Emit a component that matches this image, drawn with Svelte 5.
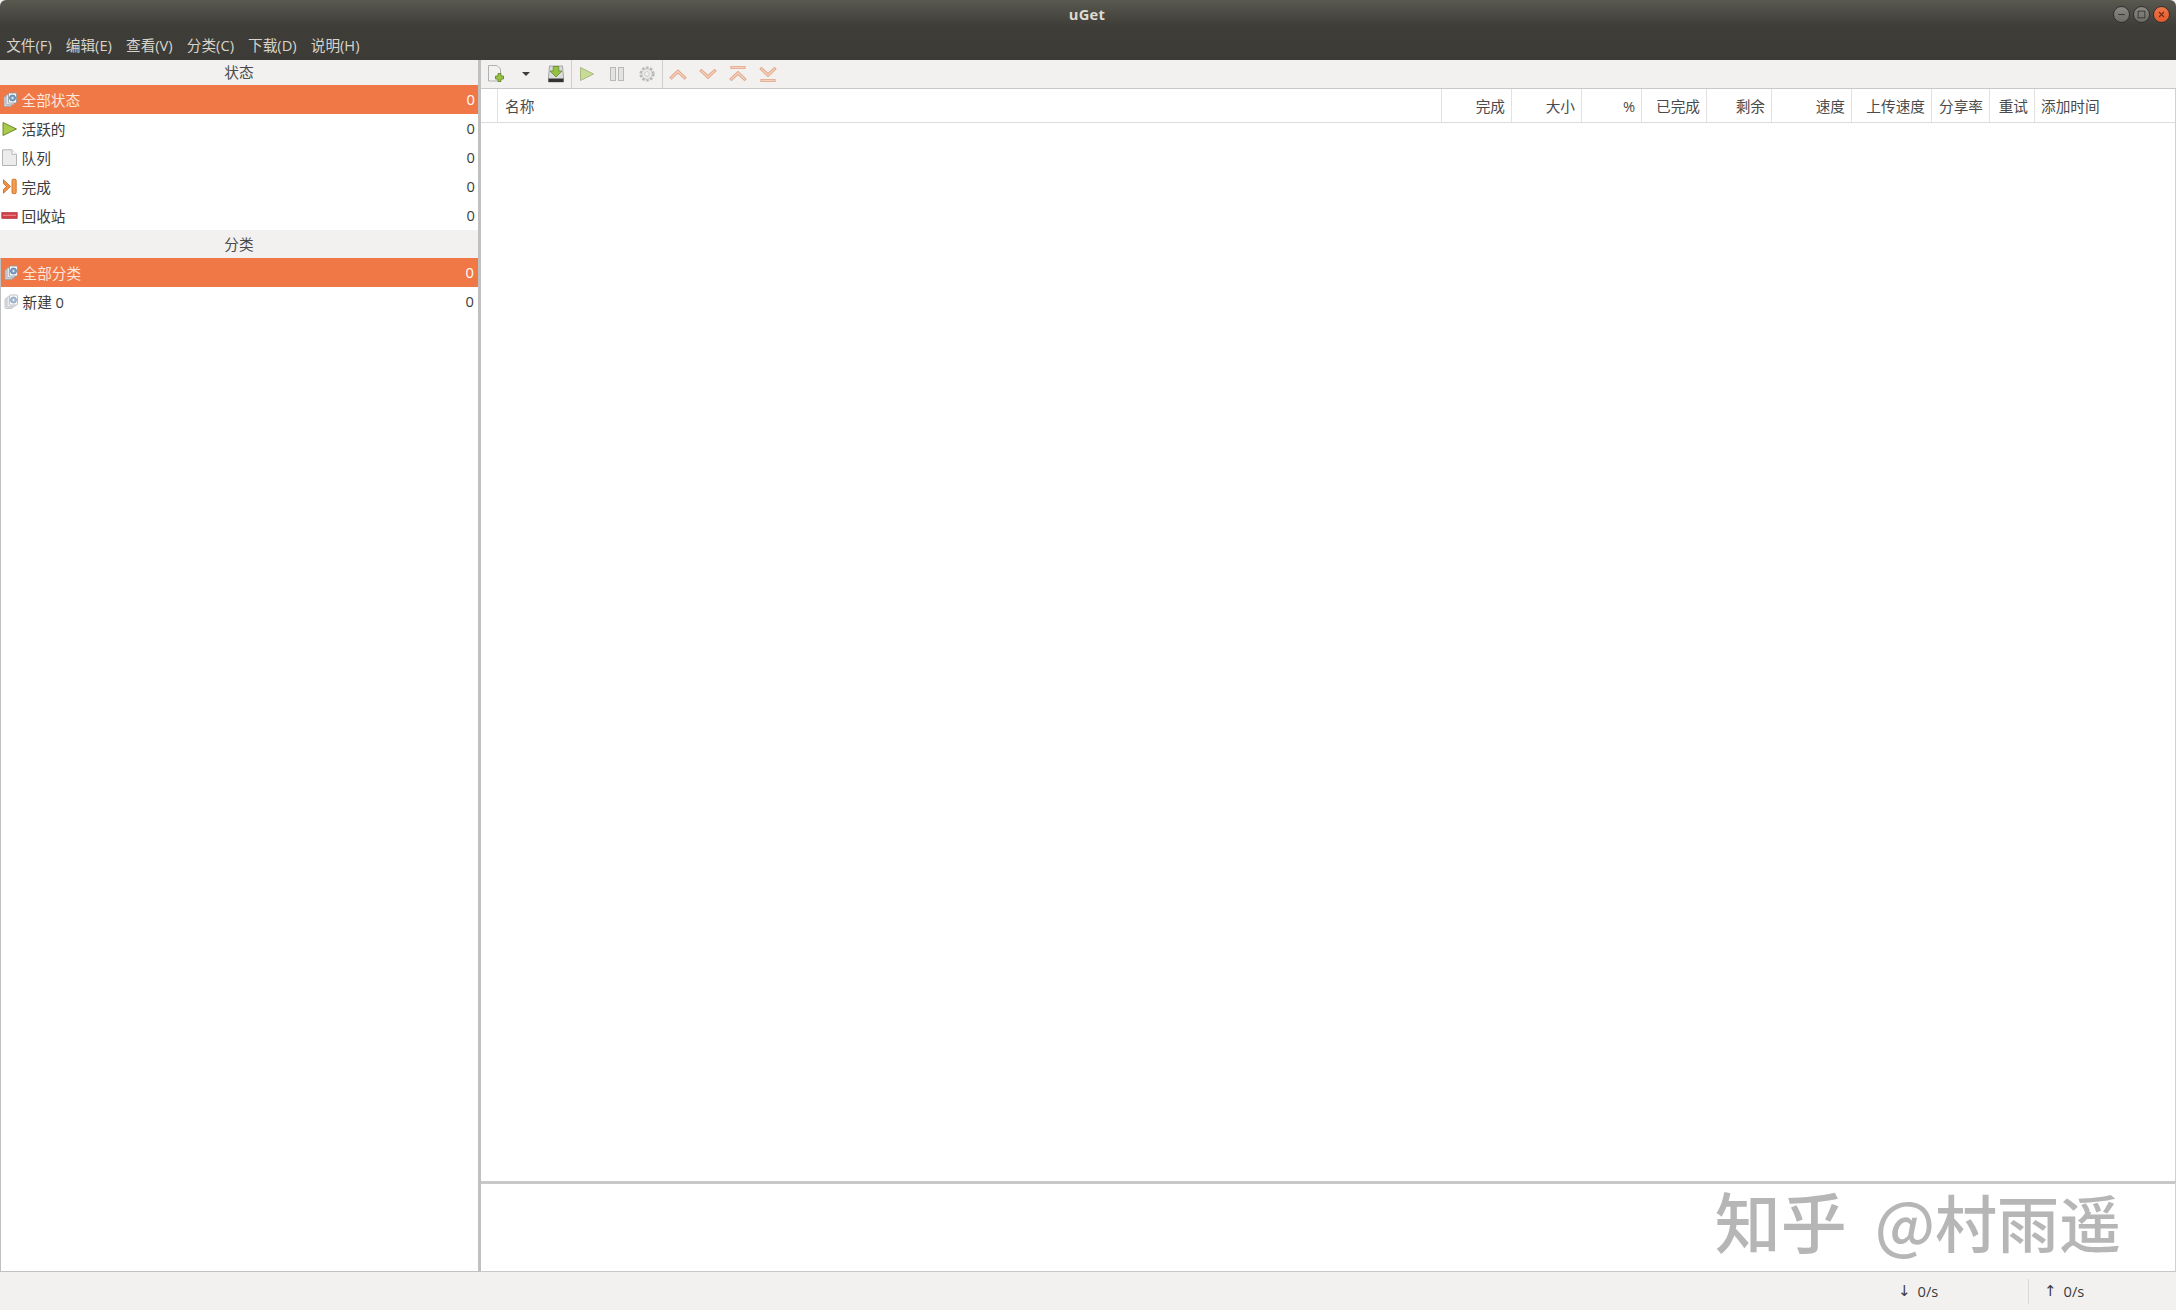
<script>
  const menus = ['文件(F)', '编辑(E)', '查看(V)', '分类(C)', '下载(D)', '说明(H)']

  const states = [
    { name: '全部状态', icon: 'stack', selected: true },
    { name: '活跃的', icon: 'play' },
    { name: '队列', icon: 'page' },
    { name: '完成', icon: 'done' },
    { name: '回收站', icon: 'bin' }
  ]

  const categories = [
    { name: '全部分类', icon: 'stack', selected: true },
    { name: '新建 0', icon: 'stack', faded: true }
  ]

  const columns = [
    { name: '完成', width: 70 },
    { name: '大小', width: 70 },
    { name: '%', width: 60 },
    { name: '已完成', width: 65 },
    { name: '剩余', width: 65 },
    { name: '速度', width: 80 },
    { name: '上传速度', width: 80 },
    { name: '分享率', width: 58 },
    { name: '重试', width: 45 }
  ]
</script>

{#snippet sideIcon(kind)}
  <svg class="side-icon" viewBox="0 0 18 18">
    {#if kind === 'stack'}
      <rect x="3" y="5.5" width="7.5" height="10" rx="1" fill="#d5d8dc" stroke="#9aa0a6" stroke-width="0.8" />
      <rect x="5" y="3.8" width="8" height="10" rx="1" fill="#e6e8ea" stroke="#9aa0a6" stroke-width="0.8" />
      <rect x="7.5" y="2" width="8" height="10" rx="1" fill="#f6f7f8" stroke="#8f969d" stroke-width="0.8" />
      <circle cx="11.5" cy="7" r="3" fill="#7fa3c7" stroke="#55789c" stroke-width="0.8" />
      <circle cx="11.5" cy="7" r="1" fill="#e8f0f7" />
    {:else if kind === 'play'}
      <path d="M2 2.5 L15.5 9 L2 15.5 Z" fill="#a8cc4a" stroke="#6f8a2e" stroke-width="1" stroke-linejoin="round" />
    {:else if kind === 'page'}
      <path d="M1.5 0.8 H11 L15.5 5.3 V16.5 H1.5 Z" fill="#ececec" stroke="#b4b4b4" stroke-width="1" />
      <path d="M11 0.8 V5.3 H15.5" fill="#fff" stroke="#b4b4b4" stroke-width="1" />
    {:else if kind === 'done'}
      <path d="M2.5 1.8 L9.5 8.5 L2.5 15.2 V11.5 L5.5 8.5 L2.5 5.5 Z" fill="#f0953f" stroke="#c9601e" stroke-width="0.8" stroke-linejoin="round" />
      <rect x="11" y="1.2" width="4.2" height="14.4" rx="1.2" fill="#f2a04e" stroke="#c9601e" stroke-width="0.8" />
    {:else}
      <rect x="0.8" y="5.5" width="15.4" height="6" fill="#cf3f46" stroke="#a52a2e" stroke-width="0.6" />
      <rect x="2" y="7.8" width="13" height="1" fill="#ee8f92" />
    {/if}
  </svg>
{/snippet}

{#snippet chevrons(d)}
  <svg viewBox="0 0 18 18">
    <path class="chev-out" {d} />
    <path class="chev-in" {d} />
  </svg>
{/snippet}

<div class="window">
  <header class="top">
    <div class="titlebar">
      <span class="title">uGet</span>
      <div class="win-buttons">
        <span class="win-btn"><svg viewBox="0 0 18 18"><path d="M5 9 H13" stroke="#3c3b37" stroke-width="1.3" /></svg></span>
        <span class="win-btn"><svg viewBox="0 0 18 18"><rect x="5" y="5" width="8" height="8" fill="none" stroke="#3c3b37" stroke-width="1.2" /></svg></span>
        <span class="win-btn close"><svg viewBox="0 0 18 18"><path d="M6 6 L12 12 M12 6 L6 12" stroke="#7a2a10" stroke-width="1.4" /></svg></span>
      </div>
    </div>
    <nav class="menubar">
      {#each menus as menu}
        <span class="menu">{menu}</span>
      {/each}
    </nav>
  </header>

  <div class="body">
    <aside class="sidebar">
      <div class="section-title">状态</div>
      {#each states as item}
        <div class="row" class:selected={item.selected}>
          {@render sideIcon(item.icon)}
          <span class="row-name">{item.name}</span>
          <span class="row-count">0</span>
        </div>
      {/each}
      <div class="section-title second">分类</div>
      <div class="cat-list">
        {#each categories as item}
          <div class="row" class:selected={item.selected} class:faded={item.faded}>
            {@render sideIcon(item.icon)}
            <span class="row-name">{item.name}</span>
            <span class="row-count">0</span>
          </div>
        {/each}
      </div>
    </aside>

    <main class="content">
      <div class="toolbar">
        <button class="tool">
          <svg viewBox="0 0 18 18">
            <path d="M1.5 0.5 H10 L13.5 4 V16 H1.5 Z" fill="#f2f2f2" stroke="#b0b0b0" />
            <path d="M8.5 11 H11 V8.5 H14 V11 H16.5 V14 H14 V16.5 H11 V14 H8.5 Z" fill="#9cc445" stroke="#5f7f22" stroke-width="0.8" />
          </svg>
        </button>
        <button class="tool drop">
          <svg viewBox="0 0 18 18"><path d="M5 7 H13 L9 11 Z" fill="#3c3c3c" /></svg>
        </button>
        <button class="tool">
          <svg viewBox="0 0 18 18">
            <path d="M2.5 1 H15.5 L16.5 12 V17 H1.5 V12 Z" fill="#dcdcdc" stroke="#8a8a8a" stroke-width="0.7" />
            <rect x="1.5" y="13.5" width="15" height="3.5" fill="#333" />
            <path d="M6.2 1.5 H11.8 V6 H15 L9 12 L3 6 H6.2 Z" fill="#93c243" stroke="#5f7f22" stroke-width="0.7" />
          </svg>
        </button>
        <span class="tool-sep"></span>
        <button class="tool dim">
          <svg viewBox="0 0 18 18"><path d="M2.5 2.5 L15.5 9 L2.5 15.5 Z" fill="#a8cc4a" stroke="#6f8a2e" stroke-linejoin="round" /></svg>
        </button>
        <button class="tool dim">
          <svg viewBox="0 0 18 18">
            <rect x="2.5" y="2.5" width="5" height="13" fill="#d8d8d8" stroke="#8a8a8a" />
            <rect x="10.5" y="2.5" width="5" height="13" fill="#d8d8d8" stroke="#8a8a8a" />
          </svg>
        </button>
        <button class="tool dim">
          <svg viewBox="0 0 18 18">
            <circle cx="9" cy="9" r="6.3" fill="#e2e2e2" stroke="#8a8a8a" stroke-width="2.6" stroke-dasharray="2.4 1.6" />
            <circle cx="9" cy="9" r="5.2" fill="#e8e8e8" stroke="#9a9a9a" stroke-width="0.8" />
            <circle cx="9" cy="9" r="2.4" fill="#f4f4f4" stroke="#9a9a9a" stroke-width="0.8" />
          </svg>
        </button>
        <span class="tool-sep"></span>
        <button class="tool">{@render chevrons('M2.5 12.5 L9 6.5 L15.5 12.5')}</button>
        <button class="tool">{@render chevrons('M2.5 6 L9 12 L15.5 6')}</button>
        <button class="tool">{@render chevrons('M3 2.5 H15 M2.5 14 L9 8 L15.5 14')}</button>
        <button class="tool">{@render chevrons('M3 15.5 H15 M2.5 4 L9 10 L15.5 4')}</button>
      </div>

      <div class="list-head">
        <span class="col spacer"></span>
        <span class="col name">名称</span>
        {#each columns as col}
          <span class="col right" style="width: {col.width}px">{col.name}</span>
        {/each}
        <span class="col last">添加时间</span>
      </div>
      <div class="list-body"></div>

      <div class="detail">
        <span class="watermark"><span class="wm-brand">知乎</span> @村雨遥</span>
      </div>
    </main>
  </div>

  <footer class="statusbar">
    <span class="speed down"><span class="speed-arrow">↓</span>0/s</span>
    <span class="speed up"><span class="speed-arrow">↑</span>0/s</span>
  </footer>
</div>

<style>
  :global(body) {
    margin: 0;
    background: #f2f1f0;
  }

  .window {
    width: 2176px;
    height: 1310px;
    display: flex;
    flex-direction: column;
    overflow: hidden;
    font-family: "Open Sans", "Noto Sans CJK SC", sans-serif;
    font-size: 14.67px;
    color: #3c3c3c;
    background: #f2f1f0;
  }

  .top {
    height: 60px;
    flex: none;
    background: linear-gradient(#5a5950 0, #3e3d38 26px, #3c3b37 100%);
    border-radius: 6px 6px 0 0;
    color: #dfdbd2;
  }

  .titlebar {
    height: 28px;
    position: relative;
    display: flex;
    justify-content: center;
    align-items: center;
  }

  .title {
    font-weight: 700;
    letter-spacing: 0.3px;
    padding-right: 2px;
  }

  .win-buttons {
    position: absolute;
    right: 6px;
    top: 5.5px;
    display: flex;
    gap: 3px;
  }

  .win-btn {
    width: 17px;
    height: 17px;
    box-sizing: border-box;
    border-radius: 50%;
    background: linear-gradient(#8a8982, #6c6b64);
    border: 0.5px solid #2f2e2a;
    display: block;
  }

  .win-btn svg {
    display: block;
    width: 100%;
    height: 100%;
  }

  .win-btn.close {
    background: linear-gradient(#f0764a, #e25a2e);
  }

  .menubar {
    height: 32px;
    display: flex;
    align-items: center;
    color: #d8d4ca;
  }

  .menu {
    padding: 0 7.2px 0 6.2px;
    white-space: nowrap;
  }

  .menu + .menu {
    padding-left: 6.9px;
  }

  .body {
    flex: 1;
    display: flex;
    min-height: 0;
  }

  .sidebar {
    width: 478px;
    flex: none;
    display: flex;
    flex-direction: column;
    background: #fff;
    border-right: 3px solid #c0c0c0;
    border-bottom: 1px solid #c0c0c0;
  }

  .section-title {
    height: 25px;
    flex: none;
    box-sizing: border-box;
    padding-bottom: 2px;
    display: flex;
    align-items: center;
    justify-content: center;
    background: #f2f1f0;
    color: #4a4a4a;
  }

  .section-title.second {
    height: 28px;
  }

  .row {
    height: 29px;
    flex: none;
    display: flex;
    align-items: center;
    padding: 0 3px 0 0;
    box-sizing: border-box;
  }

  .row.selected {
    background: #f07746;
    color: #fff;
  }

  .row.selected .row-name {
    color: #fde6da;
  }

  .row.faded .side-icon {
    opacity: 0.7;
  }

  .side-icon {
    width: 18px;
    height: 18px;
    flex: none;
    margin: 0 3px 0 0.5px;
  }

  .row-name {
    flex: 1;
    white-space: nowrap;
  }

  .row-count {
    padding-bottom: 1px;
  }

  .cat-list {
    flex: 1;
    border-left: 1px solid #c0c0c0;
  }

  .cat-list .row {
    padding-right: 4px;
  }

  .content {
    flex: 1;
    min-width: 0;
    display: flex;
    flex-direction: column;
  }

  .toolbar {
    height: 28px;
    flex: none;
    display: flex;
    align-items: center;
    background: #f2f1f0;
    border-bottom: 1px solid #c8c8c8;
  }

  .tool {
    width: 30px;
    height: 28px;
    padding: 0;
    border: 0;
    background: none;
    display: flex;
    align-items: center;
    justify-content: center;
  }

  .tool svg {
    width: 18px;
    height: 18px;
    display: block;
  }

  .tool.dim {
    opacity: 0.55;
  }

  .chev-out,
  .chev-in {
    fill: none;
    stroke-linecap: square;
  }

  .chev-out {
    stroke: #dfa78c;
    stroke-width: 3.2;
  }

  .chev-in {
    stroke: #f7cfba;
    stroke-width: 1.4;
  }

  .tool-sep {
    width: 1px;
    height: 28px;
    background: #cfcfcf;
  }

  .list-head {
    height: 33px;
    flex: none;
    display: flex;
    background: #fff;
    border-bottom: 1px solid #dcdcdc;
    border-right: 1px solid #d0d0d0;
    color: #4a4a4a;
  }

  .col {
    box-sizing: border-box;
    display: flex;
    align-items: center;
    flex: none;
    border-right: 1px solid #e2e2e2;
    white-space: nowrap;
  }

  .col.spacer {
    width: 17px;
  }

  .col.name {
    flex: 1;
    padding-left: 7px;
  }

  .col.right {
    justify-content: flex-end;
    padding-right: 6px;
  }

  .col.last {
    width: 140px;
    padding-left: 6px;
    border-right: 0;
  }

  .list-body {
    flex: 1;
    background: #fff;
    border-right: 1px solid #d0d0d0;
  }

  .detail {
    height: 91px;
    flex: none;
    box-sizing: border-box;
    display: flex;
    justify-content: flex-end;
    align-items: center;
    padding: 0 54px 18px 0;
    background: #fff;
    border-top: 3px solid #c8c8c8;
    border-bottom: 1px solid #c8c8c8;
    border-right: 1px solid #d0d0d0;
  }

  .watermark {
    font-family: "Noto Sans CJK SC", sans-serif;
    font-size: 62px;
    font-weight: 500;
    color: #b6b6b6;
    line-height: 1;
    white-space: nowrap;
  }

  .wm-brand {
    font-size: 66px;
    margin-right: 14px;
  }

  .statusbar {
    height: 38px;
    flex: none;
    display: flex;
    justify-content: flex-end;
    align-items: center;
    color: #3c3c3c;
  }

  .speed {
    display: flex;
    align-items: center;
    font-size: 14.67px;
  }

  .speed-arrow {
    margin-right: 7px;
    font-family: "DejaVu Sans", sans-serif;
    font-size: 15px;
  }

  .speed.down {
    width: 130px;
  }

  .speed.up {
    width: 148px;
    height: 25px;
    padding-left: 15px;
    box-sizing: border-box;
    border-left: 1px solid #d8d8d8;
  }
</style>
